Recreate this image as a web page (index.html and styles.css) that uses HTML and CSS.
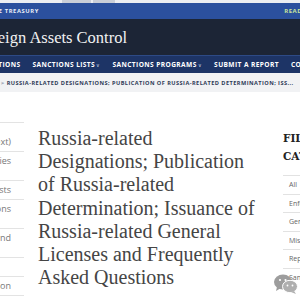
FILE: index.html
```html
<!DOCTYPE html>
<html lang="en">
<head>
  <meta charset="UTF-8">
  <title>Russia-related Designations - OFAC</title>
  <link rel="stylesheet" href="styles.css">
</head>
<body>

  <div class="chrome">
    <span class="tab tab-a"></span>
    <span class="tab tab-b"></span>
  </div>

  <div class="topbar">
    <span class="agency">U.S. DEPARTMENT OF THE TREASURY</span>
    <span class="read">READ MORE</span>
  </div>

  <div class="brand">
    <span class="brand-name">Office of Foreign Assets Control</span>
  </div>

  <nav class="mainnav">
    <a class="first">RECENT ACTIONS</a>
    <a>SANCTIONS LISTS<span class="caret">&#8744;</span></a>
    <a>SANCTIONS PROGRAMS<span class="caret">&#8744;</span></a>
    <a>SUBMIT A REPORT</a>
    <a>CONTACT US</a>
  </nav>

  <div class="crumbs">
    <span class="sep">&gt;</span> RUSSIA-RELATED DESIGNATIONS; PUBLICATION OF RUSSIA-RELATED DETERMINATION; ISS...
  </div>

  <div class="main">
    <aside class="sidebar">
      <ul>
        <li><span class="ln">Search OFAC</span><span class="ln end">Sanctions List Service (Text)</span></li>
        <li><span class="ln end">Sanctions Programs and Countries</span><span class="ln">Info</span></li>
        <li><span class="ln end">Other OFAC Sanctions Lists</span></li>
        <li><span class="ln end">Additional Sanctions Designations</span><span class="ln">Data</span></li>
        <li><span class="ln end">Civil Penalties and</span><span class="ln">Enforcement</span></li>
        <li><span class="ln">Reports</span></li>
        <li><span class="ln end">Recent Actions Publication</span></li>
      </ul>
    </aside>

    <h1 class="title">Russia-related Designations; Publication of Russia-related Determination; Issuance of Russia-related General Licenses and Frequently Asked Questions</h1>

    <aside class="filters">
      <h3>FILTER BY<br>CATEGORY</h3>
      <ul>
        <li>All</li>
        <li>Enforcement</li>
        <li>General</li>
        <li>Miscellaneous</li>
        <li>Reports</li>
        <li>Sanctions</li>
      </ul>
    </aside>
  </div>

  <svg class="wechat" width="26" height="22" viewBox="0 0 26 22">
    <ellipse cx="10" cy="9" rx="9" ry="7.5" fill="#8c8c8c"/>
    <path d="M4 14 L3 18 L8 15 Z" fill="#8c8c8c"/>
    <ellipse cx="17" cy="13.5" rx="7.5" ry="6.2" fill="#a2a2a2" stroke="#fff" stroke-width="1"/>
    <path d="M21 18 L23 21 L18 19 Z" fill="#a2a2a2"/>
    <circle cx="7" cy="7" r="1.1" fill="#fff"/>
    <circle cx="12.5" cy="7" r="1.1" fill="#fff"/>
    <circle cx="14.5" cy="12.5" r="0.9" fill="#fff"/>
    <circle cx="19.5" cy="12.5" r="0.9" fill="#fff"/>
  </svg>

</body>
</html>
```

FILE: styles.css
```css
body { margin: 0; width: 300px; height: 300px; overflow: hidden; position: relative; background: #fff; font-family: "Open Sans", "Liberation Sans", sans-serif; }

.chrome { height: 3px; background: #eceef2; display: flex; }
.tab { display: block; height: 3px; background: #c9ced8; }
.tab-a { margin-left: 62px; width: 29px; }
.tab-b { margin-left: 2px; width: 22px; }

.topbar { height: 16px; background: #2b509e; display: flex; align-items: center; justify-content: space-between; overflow: hidden; white-space: nowrap; }
.agency { flex: none; color: #e8edf8; font-size: 5.8px; font-weight: 700; letter-spacing: 0.6px; margin-left: -84px; }
.read { flex: none; color: #c7e39d; font-size: 6px; font-weight: 700; letter-spacing: 0.5px; margin-right: -24px; }

.brand { height: 36px; background: #1c2536; display: flex; align-items: center; overflow: hidden; white-space: nowrap; border-bottom: 1px solid #2d4a86; }
.brand-name { color: #f2f2f2; font-family: "Liberation Serif", serif; font-size: 16.5px; margin-left: -89px; padding-top: 2px; }

.mainnav { height: 17px; background: #1d3466; display: flex; align-items: center; gap: 12px; overflow: hidden; white-space: nowrap; }
.mainnav a { color: #fff; font-size: 6.6px; font-weight: 700; letter-spacing: 0.4px; }
.mainnav .first { margin-left: -41px; }
.caret { font-size: 5px; font-weight: 400; margin-left: 1px; color: #c9d2e6; }

.crumbs { height: 19px; background: #f1f2f4; display: flex; align-items: center; color: #2e3b57; font-size: 5.6px; font-weight: 700; letter-spacing: 0.45px; white-space: nowrap; overflow: hidden; padding-left: 1px; }
.sep { color: #8a93a6; margin-right: 2px; }

.main { display: flex; align-items: flex-start; }

.sidebar { width: 24px; flex: none; overflow: hidden; padding-top: 30px; }
.sidebar ul { list-style: none; margin: 0 0 0 -196px; padding: 0; width: 220px; border-top: 1px solid #e3e3e3; }
.sidebar li { font-size: 9px; color: #777; line-height: 10px; padding: 4px 0; border-bottom: 1px solid #e3e3e3; white-space: nowrap; }
.ln { display: block; }
.ln.end { text-align: right; padding-right: 13px; }

.title { flex: none; width: 226px; margin: 35px 0 0 14px; font-family: "Liberation Serif", serif; font-weight: 400; font-size: 20px; line-height: 23.2px; color: #454545; }

.filters { flex: none; margin-left: 19px; padding-top: 37px; width: 60px; }
.filters h3 { margin: 0; font-family: "DejaVu Serif", serif; font-size: 10.5px; line-height: 18px; color: #222; font-weight: 700; white-space: nowrap; }
.filters ul { list-style: none; margin: 10px 0 0; padding: 0; }
.filters li { font-size: 7px; color: #666; padding: 5px 0 4.6px 6px; border-top: 1px solid #e2e2e2; line-height: 8px; white-space: nowrap; }

.wechat { position: absolute; left: 273px; top: 273px; opacity: 0.85; }
```
